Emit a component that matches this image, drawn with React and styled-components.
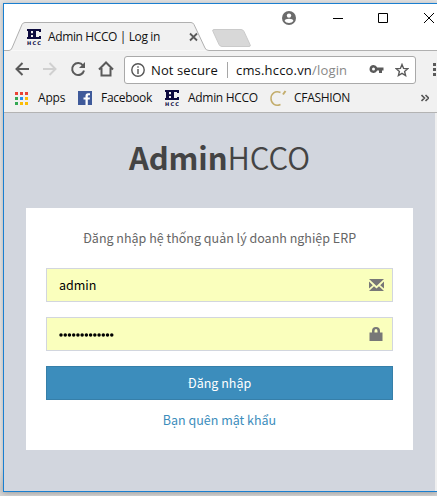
import React from "react";
import styled, { createGlobalStyle } from "styled-components";

const Global = createGlobalStyle`
  * { box-sizing: border-box; }
  body { margin: 0; overflow: hidden; background: #fff; }
`;
const chromeFont = `"Open Sans", "Noto Sans", sans-serif`;
const pageFont = `"Noto Sans CJK JP", "Noto Sans", sans-serif`;

const Desktop = styled.div`
  width: 437px;
  height: 496px;
  padding: 3px 0 4px 3px;
  overflow: hidden;
  background: linear-gradient(#e4e4e4, #e6e6e6 94%, #cfcfcf 99%, #d6d6d6);
`;
const Window = styled.div`
  width: 434px;
  height: 489px;
  border: 1px solid #1a7fd0;
  border-right: 0;
  background: #fff;
  display: flex;
  flex-direction: column;
  box-shadow: 0 1px 6px rgba(0, 0, 0, 0.25);
`;
const TitleBar = styled.div`
  height: 47px;
  flex: none;
  position: relative;
`;
const TabShape = styled.svg`
  position: absolute;
  left: 0;
  top: 0;
`;
const TabContent = styled.div`
  position: absolute;
  left: 23px;
  top: 24px;
  width: 173px;
  height: 18px;
  display: flex;
  align-items: center;
`;
const Label = styled.span`
  font-family: ${chromeFont};
  font-size: ${(p) => p.$size || 12}px;
  letter-spacing: ${(p) => p.$track ?? -0.3}px;
  line-height: 18px;
  white-space: pre;
  color: #111;
`;
const TabTitle = styled(Label)`
  margin-left: 7px;
  flex: 1;
`;
const WindowControls = styled.svg`
  position: absolute;
  left: 276px;
  top: 5px;
`;
const Toolbar = styled.div`
  height: 35px;
  flex: none;
  background: #f1f1f1;
  display: flex;
  align-items: center;
`;
const NavIcons = styled.svg`
  flex: none;
  width: 120px;
  height: 35px;
`;
const Omnibox = styled.div`
  width: 292px;
  height: 28px;
  flex: none;
  margin-top: 2px;
  background: #fff;
  border: 1px solid #a9a9a9;
  border-radius: 3px;
  display: flex;
  align-items: center;
  padding: 0 6px;
`;
const Divider = styled.i`
  width: 1px;
  height: 16px;
  background: #a6a6a6;
  margin: 0 8px 0 9px;
`;
const Security = styled(Label)`
  margin-left: 6px;
  width: 67px;
`;
const Url = styled(Label)`
  flex: 1;
`;
const Path = styled.span`
  color: #888;
`;
const KeyIcon = styled.svg`
  flex: none;
  margin-right: 11px;
`;
const MenuDots = styled.svg`
  flex: none;
  margin-left: 14px;
`;
const Bookmarks = styled.div`
  height: 27px;
  flex: none;
  background: #f1f1f1;
  border-bottom: 1px solid #b3b3b3;
  display: flex;
  align-items: center;
  padding: 0 0 2px 11px;
`;
const Bookmark = styled.div`
  width: ${(p) => p.$w}px;
  flex: none;
  display: flex;
  align-items: center;
  gap: ${(p) => p.$gap}px;
`;
const More = styled.svg`
  margin-left: auto;
  margin-right: 8px;
`;
const Page = styled.main`
  flex: 1;
  background: #d2d6de;
  border-right: 2px solid #f0f0f0;
  padding: 18px 22px 0;
  font-family: ${pageFont};
`;
const Brand = styled.h1`
  margin: 0;
  height: 77px;
  line-height: 52px;
  text-align: center;
  font-size: 31px;
  font-weight: 350;
  color: #444;
  b { font-weight: 700; letter-spacing: -0.1px; }
`;
const Card = styled.section`
  height: 242px;
  background: #fff;
  padding: 20px;
  text-align: center;
  color: #666;
  font-size: 12.5px;
`;
const Intro = styled.p`
  margin: 0 0 20px;
  line-height: 20px;
  white-space: nowrap;
`;
const Field = styled.div`
  height: 34px;
  margin-bottom: 15px;
  padding: 0 8px 0 12px;
  border: 1px solid #d2d6de;
  background: #faffbd;
  display: flex;
  align-items: center;
  justify-content: space-between;
  color: #000;
  line-height: 20px;
`;
const Submit = styled.button`
  display: block;
  width: 100%;
  height: 34px;
  padding: 0;
  border: 1px solid #367fa9;
  background: #3c8dbc;
  color: #fff;
  font: 400 12.5px/20px ${pageFont};
`;
const Forgot = styled.a`
  display: block;
  margin-top: 10px;
  line-height: 20px;
  color: #3c8dbc;
`;
const Tiny = styled.text`
  font: 700 5px "DejaVu Sans", sans-serif;
`;

const HccLogo = () => (
  <svg width="14" height="16" viewBox="0 0 14 16" fill="#0d0b3f">
    <path d="M0 0h14v3h-2V2H9v6h3V7h2v3H0V8h1V2H0zM4 2v2.200h2V2zM4 6v2h2V6z" fillRule="evenodd" />
    <Tiny x="0" y="15.500" textLength="14" lengthAdjust="spacing">HCC</Tiny>
  </svg>
);

const appColors = ["#ea4335", "#ea4335", "#ea4335", "#34a853", "#2a8ff0", "#fbbc05", "#34a853", "#fbbc05", "#fbbc05"];

export default function App() {
  return (
    <Desktop>
      <Global />
      <Window>
        <TitleBar>
          <TabShape width="433" height="47">
            <path d="M0 46.500H5Q7 46.500 8 44L18 20.500Q19 18.500 21 18.500H187Q189 18.500 190 20.500L201 44Q202 46.500 205 46.500H433" fill="#f1f1f1" stroke="#b0b0b0" />
            <path d="M210 25.500h27q2 0 3 2l6 13q1 2-1 2h-27q-2 0-3-2l-6-13q-1-2 1-2z" fill="#d8d8d8" stroke="#cacaca" />
          </TabShape>
          <TabContent>
            <HccLogo />
            <TabTitle $track={-0.38}>Admin HCCO | Log in</TabTitle>
            <svg width="12" height="12" viewBox="0 0 12 12" stroke="#5a5a5a" strokeWidth="1.800"><path d="M2 2.500l7 7M9 2.500l-7 7" /></svg>
          </TabContent>
          <WindowControls width="157" height="20" fill="none" stroke="#000">
            <circle cx="9" cy="9" r="7" fill="#6b6b6b" stroke="none" />
            <circle cx="9" cy="6.600" r="2.200" fill="#fff" stroke="none" />
            <path d="M4.600 12Q5 9.800 9 9.800T13.400 12Q12 14 9 14T4.600 12z" fill="#fff" stroke="none" />
            <path d="M53 9.500h10M98.500 4.500h9v9h-9zM144 4l10 10M154 4l-10 10" />
          </WindowControls>
        </TitleBar>
        <Toolbar>
          <NavIcons fill="none" stroke="#5a5a5a" strokeWidth="2">
            <path d="M25 18H13M18.500 12l-6 6 6 6" />
            <path d="M39 18h12M45.500 12l6 6-6 6" stroke="#d0d0d0" />
            <path d="M79 14.500A6 6 0 1 0 80 19.500" />
            <path d="M81 11v6h-6z" fill="#5a5a5a" stroke="none" />
            <path d="M95 18.500l7-7 7 7M97.500 17v7.500h9V17" />
          </NavIcons>
          <Omnibox>
            <svg width="14" height="14" fill="none" stroke="#555" strokeWidth="1.400"><circle cx="7" cy="7" r="6.200" /><path d="M7 6v5M7 3.200v1.600" /></svg>
            <Security $size={13} $track={0.1}>Not secure</Security>
            <Divider />
            <Url $size={13} $track={0.18}>cms.hcco.vn<Path>/login</Path></Url>
            <KeyIcon width="15" height="12" fill="#5a5a5a"><path fillRule="evenodd" d="M4.500 1a4 4 0 0 1 3.700 2.600H14.500v3h-1.500v2.400h-3V6.600H8.200A4 4 0 1 1 4.500 1zM4.500 3.500a1.500 1.500 0 1 0 0 3 1.500 1.500 0 0 0 0-3z" /></KeyIcon>
            <svg width="14" height="14" viewBox="0 0 14 14" fill="none" stroke="#5a5a5a" strokeWidth="1.400"><path d="M7 1.500l1.600 3.900 4.200.3-3.200 2.700 1 4.100L7 10.300l-3.600 2.200 1-4.100L1.200 5.700l4.200-.3z" /></svg>
          </Omnibox>
          <MenuDots width="7" height="18" fill="#5a5a5a"><path d="M3 3h3v3H3zM3 8h3v3H3zM3 13h3v3H3z" /></MenuDots>
        </Toolbar>
        <Bookmarks>
          <Bookmark $w={63} $gap={10}>
            <svg width="13" height="13">{appColors.map((c, i) => <rect key={i} x={(i % 3) * 5} y={Math.floor(i / 3) * 5} width="3" height="3" fill={c} />)}</svg>
            <Label $track={-0.2}>Apps</Label>
          </Bookmark>
          <Bookmark $w={87} $gap={9}>
            <svg width="14" height="14"><path fill="#3f5a9a" d="M0 0h14v14H0z" /><path fill="#fff" d="M7.500 14V8.500H5.500v-2h2V5Q7.500 2.200 10 2.200h2v2h-1.300Q9.800 4.200 9.800 5v1.500H12l-.3 2H9.800V14z" /></svg>
            <Label>Facebook</Label>
          </Bookmark>
          <Bookmark $w={105} $gap={9}>
            <HccLogo />
            <Label>Admin HCCO</Label>
          </Bookmark>
          <Bookmark $w={90} $gap={7}>
            <svg width="17" height="17" fill="none" stroke="#c3ad6c" strokeWidth="1.500"><path d="M10.500 2.500C5 0 1 4 1 8.500S5 17 10.500 14.500" /><path d="M15.500 1l-2.500 3.500" strokeWidth="2" /></svg>
            <Label>CFASHION</Label>
          </Bookmark>
          <More width="8" height="8" fill="none" stroke="#555" strokeWidth="1.600"><path d="M.5 1l3 3-3 3M4.500 1l3 3-3 3" /></More>
        </Bookmarks>
        <Page>
          <Brand><b>Admin</b>HCCO</Brand>
          <Card>
            <Intro>Đăng nhập hệ thống quản lý doanh nghiệp ERP</Intro>
            <Field>
              <span>admin</span>
              <svg width="15" height="12" fill="#777"><path d="M0 0h15L7.500 7zM0 2.500l3.800 3.700L0 9.500zM15 2.500l-3.800 3.700L15 9.500zM0 12l5-4.700L7.500 9.500 10 7.300l5 4.700z" /></svg>
            </Field>
            <Field>
              <svg width="56" height="6">{Array.from({ length: 13 }, (_, i) => <circle key={i} cx={2 + i * 4.23} cy="4" r="1.750" />)}</svg>
              <svg width="15" height="14" fill="#777"><path d="M0.500 5.500H3V4Q3 0 7 0T11 4v1.500h2.500V14H.5zM5.500 5.500h3V4Q8.500 2 7 2T5.500 4z" fillRule="evenodd" /></svg>
            </Field>
            <Submit>Đăng nhập</Submit>
            <Forgot>Bạn quên mật khẩu</Forgot>
          </Card>
        </Page>
      </Window>
    </Desktop>
  );
}
